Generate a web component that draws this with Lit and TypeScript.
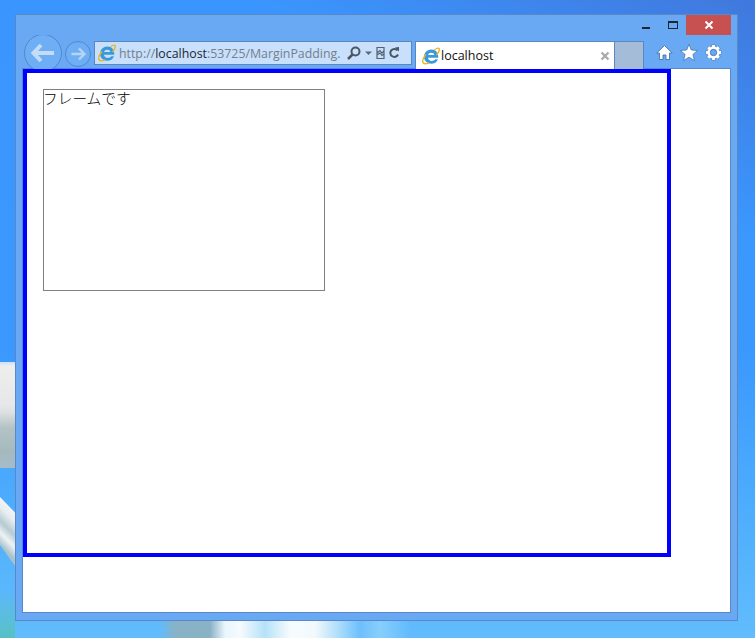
import { LitElement, html, css, svg } from "lit";
import { customElement } from "lit/decorators.js";

const ieIcon = (size: number) => html`<svg class="ie" width=${size} height=${size} viewBox="0 0 18 18">
  <path d="M2 9.800C2 5.600 5.300 2.400 9.500 2.400C13.800 2.400 16.600 5.800 16.300 10.800H6C6.200 14.200 11.200 15 13.400 12.200H16C14.800 15.400 12.300 16.800 9.300 16.800C5.200 16.800 2 13.900 2 9.800ZM6.100 8H12.300C12.100 5 6.600 5 6.100 8Z" fill="#3a9ad9"/>
  <path d="M12.500 2.800C15.600 .6 17.800 .6 17.300 3C17 4.500 15.800 6.500 14.500 8" fill="none" stroke="#ecb52c" stroke-width="1.400"/>
  <path d="M3.800 7.500C1.500 10.500 .2 13.500 .9 15.500C1.500 17.200 4 17.200 7 15.800" fill="none" stroke="#ecb52c" stroke-width="1.400"/>
</svg>`;

@customElement("app-root")
export class AppRoot extends LitElement {
  static styles = css`
    :host {
      display: block;
      width: 755px;
      height: 638px;
      overflow: hidden;
      font-family: "Open Sans", "Liberation Sans", sans-serif;
    }
    .desktop {
      position: relative;
      box-sizing: border-box;
      width: 755px;
      height: 638px;
      padding: 14px 17px 17px 15px;
      background:
        linear-gradient(205deg, rgba(66,115,215,.85) 0, rgba(60,130,235,0) 24%),
        linear-gradient(180deg, #3a96fe 0%, #3b98fe 55%, #55b4fc 88%, #62bcfd 100%);
    }
    .cloud { position: absolute; }
    .c1 { left: 0; top: 362px; width: 15px; height: 106px; background: linear-gradient(180deg, #cfe0f5 0, #eeeeee 4%, #e6e7e8 40%, #dcdfe0 48%, #b3c3c5 62%, #a5b9bd 85%, #a5bcc8 100%); }
    .c3 { left: 0; top: 494px; width: 15px; height: 74px; clip-path: polygon(0 4%, 100% 25%, 100% 97%, 0 69%); background: linear-gradient(225deg, #f2f5f6 20%, #e6ecef 32%, #b5cad2 47%, #eef3f5 60%, #a9c2cc 74%); }
    .c4 { left: 0; top: 590px; width: 15px; height: 48px; background: linear-gradient(0deg, #58c0c4, rgba(88,192,196,0)); }
    .c5 { left: 160px; top: 621px; width: 250px; height: 17px; background: linear-gradient(90deg, rgba(130,175,200,0) 0, #88b2c6 6%, #8ab2c4 20%, #e8f6fc 26%, #f6fbfe 32%, #b5e2f8 42%, #f6fbfe 52%, #f2f9fd 62%, #a8dcfa 72%, #6cbffd 80%, #88cefc 88%, rgba(102,189,253,0) 100%); }
    .window {
      position: relative;
      box-sizing: border-box;
      height: 607px;
      border: 1px solid #5a88c6;
      background: #69a9f4;
      padding: 0 6px 7px 6px;
      display: flex;
      flex-direction: column;
    }
    .caption {
      height: 20px;
      flex: none;
      display: flex;
      justify-content: flex-end;
      align-items: flex-start;
    }
    .cap-btn {
      width: 27px;
      height: 20px;
      display: flex;
      align-items: center;
      justify-content: center;
    }
    .cap-btn svg { display: block; }
    .cap-close { width: 45px; background: #c75050; }
    .nav {
      flex: none;
      height: 34px;
      display: flex;
      align-items: flex-start;
      position: relative;
      z-index: 1;
    }
    .navclip {
      display: flex;
      flex: none;
      height: 34px;
      overflow: hidden;
      padding-left: 1px;
    }
    .round {
      box-sizing: border-box;
      flex: none;
      border-radius: 50%;
      border: 1px solid #5089cc;
      background: #6eaef5;
      display: flex;
      align-items: center;
      justify-content: center;
    }
    .back { width: 38px; height: 38px; margin: -1px 0 0 1px; }
    .forward { width: 26px; height: 26px; margin: 6px 3px 0 3px; }
    .address {
      box-sizing: border-box;
      flex: none;
      width: 318px;
      height: 24px;
      margin-top: 6px;
      border: 1px solid #5a87bd;
      background: #c8e0fb;
      display: flex;
      align-items: center;
      padding-left: 3px;
    }
    .url {
      margin-left: 3px;
      width: 225px;
      font-size: 12.350px;
      white-space: nowrap;
      overflow: hidden;
      color: #737f8c;
    }
    .url b { font-weight: 400; color: #1c2733; }
    .addr-tools { display: flex; align-items: center; margin-left: 2px; }
    .addr-tools svg { display: block; }
    .tab {
      box-sizing: border-box;
      flex: none;
      width: 200px;
      height: 28px;
      margin: 6px 0 0 3px;
      background: #fff;
      border: 1px solid #5a87bd;
      border-bottom: none;
      display: flex;
      align-items: center;
      padding: 0 4px 0 6px;
      font-size: 12.500px;
      color: #111;
    }
    .tab span { margin-left: 1px; flex: 1; }
    .newtab {
      box-sizing: border-box;
      flex: none;
      width: 29px;
      height: 28px;
      margin-top: 6px;
      background: #a5bcd8;
      border: 1px solid #5a87bd;
      border-left: none;
      border-bottom: none;
    }
    .tools {
      display: flex;
      gap: 7px;
      margin: 9px 0 0 12px;
    }
    .tools svg { display: block; }
    .client {
      flex: 1;
      margin-top: -1px;
      border: 1px solid #5a88c6;
      background: #fff;
      min-height: 0;
    }
    .frame {
      box-sizing: border-box;
      width: 648px;
      height: 488px;
      border: 4px solid #0000ff;
      padding: 16px;
    }
    .inner {
      box-sizing: border-box;
      width: 282px;
      height: 202px;
      border: 1px solid #808080;
      font-family: "Noto Sans CJK JP", sans-serif;
      font-size: 14.700px;
      font-weight: 300;
      line-height: 16px;
      color: #000;
      white-space: nowrap;
      text-indent: -1px;
    }
  `;

  render() {
    return html`<div class="desktop">
      <div class="cloud c1"></div><div class="cloud c3"></div>
      <div class="cloud c4"></div><div class="cloud c5"></div>
      <div class="window">
        <div class="caption">
          <div class="cap-btn">
            <svg width="10" height="10" viewBox="0 0 10 10"><rect x="1" y="7" width="8" height="2" fill="#1c2530"/></svg>
          </div>
          <div class="cap-btn">
            <svg width="12" height="10" viewBox="0 0 12 10"><rect x="1.500" y="1.500" width="9" height="7" fill="none" stroke="#1c2530"/><rect x="1" y="1" width="10" height="2" fill="#1c2530"/></svg>
          </div>
          <div class="cap-btn cap-close">
            <svg width="10" height="10" viewBox="0 0 10 10"><path d="M1.500 1.500L8.500 8.500M8.500 1.500L1.500 8.500" stroke="#fff" stroke-width="2"/></svg>
          </div>
        </div>
        <div class="nav">
          <div class="navclip">
            <div class="round back">
              <svg width="26" height="22" viewBox="0 0 26 22"><path d="M11 3L3.500 11L11 19M4.500 11H24" fill="none" stroke="#c4dcf8" stroke-width="4"/></svg>
            </div>
            <div class="round forward">
              <svg width="18" height="16" viewBox="0 0 18 16"><path d="M10 2.500L15.500 8L10 13.500M14.500 8H2.500" fill="none" stroke="#b7d3f5" stroke-width="2.400"/></svg>
            </div>
          </div>
          <div class="address">
            ${ieIcon(18)}
            <div class="url">http://<b>localhost</b>:53725/MarginPadding.</div>
            <div class="addr-tools">
              <svg width="16" height="16" viewBox="0 0 16 16"><circle cx="9.500" cy="6.500" r="4" fill="none" stroke="#4b5661" stroke-width="2"/><path d="M6.500 9.500L2 14" stroke="#4b5661" stroke-width="2.500"/></svg>
              <svg width="12" height="16" viewBox="0 0 12 16"><path d="M3 6.500H10L6.500 10Z" fill="#5c6975"/></svg>
              <svg width="13" height="16" viewBox="0 0 13 16"><path d="M3 2.500H10V13.500H3ZM3 8L6 5.500L8 8L10 6M3 10L6 8L8 10.500L10 9" fill="none" stroke="#55616d" stroke-width="1.200"/></svg>
              <svg width="14" height="16" viewBox="0 0 14 16"><path d="M10.500 5.500A4 4 0 1 0 11 9.500" fill="none" stroke="#4b5661" stroke-width="2"/><path d="M8 2.500L12 2V6.500Z" fill="#4b5661"/></svg>
            </div>
          </div>
          <div class="tab">
            ${ieIcon(18)}
            <span>localhost</span>
            <svg width="10" height="10" viewBox="0 0 10 10"><path d="M1.500 1.500L8.500 8.500M8.500 1.500L1.500 8.500" stroke="#a8a8a8" stroke-width="2.200"/></svg>
          </div>
          <div class="newtab"></div>
          <div class="tools">
            <svg width="17" height="17" viewBox="0 0 17 17"><path d="M8.500 1.500L.8 9H3.500V15.500H7V11H10V15.500H13.500V9H16.200Z" fill="#fff" stroke="#3f6b9c" stroke-width=".8"/></svg>
            <svg width="18" height="17" viewBox="0 0 18 17"><path d="M9 .4L11.300 6L17.600 6.500L12.900 10.400L14.400 16.500L9 13.200L3.600 16.500L5.100 10.400L.4 6.500L6.700 6Z" fill="#fff" stroke="#3f6b9c" stroke-width=".7"/></svg>
            <svg width="17" height="17" viewBox="0 0 17 17">
              ${[0, 45, 90, 135].map(
                (a) => svg`<rect x="6.800" y=".8" width="3.400" height="15.400" fill="#fff" stroke="#3f6b9c" stroke-width=".5" transform="rotate(${a} 8.500 8.500)"/>`
              )}
              <circle cx="8.500" cy="8.500" r="6" fill="#fff"/>
              <circle cx="8.500" cy="8.500" r="3.200" fill="#69a9f4" stroke="#3f6b9c" stroke-width=".8"/>
            </svg>
          </div>
        </div>
        <div class="client">
          <div class="frame">
            <div class="inner">フレームです</div>
          </div>
        </div>
      </div>
    </div>`;
  }
}
